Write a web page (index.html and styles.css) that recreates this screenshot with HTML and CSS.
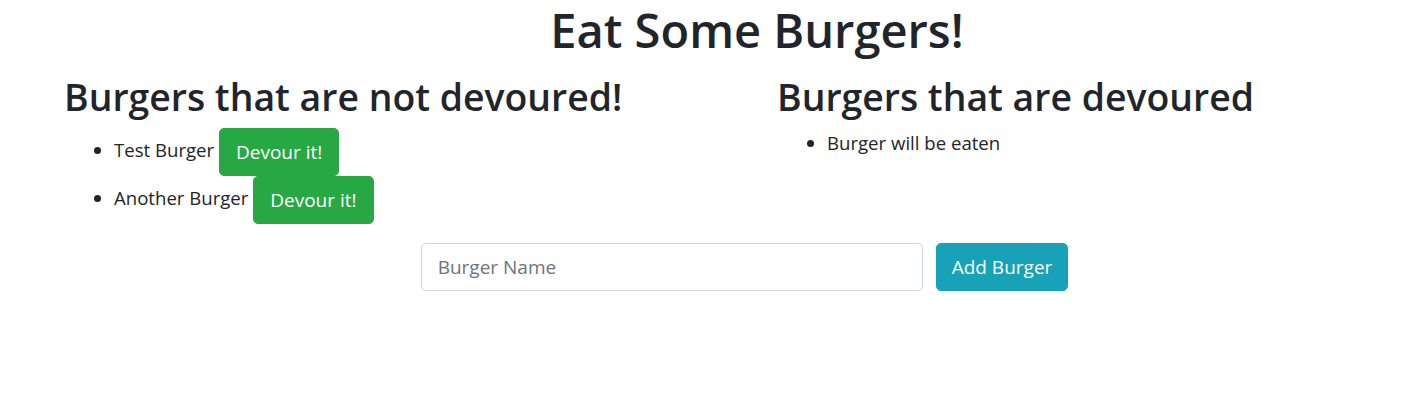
FILE: index.html
```html
<!DOCTYPE html>
<html lang="en">
<head>
<meta charset="utf-8">
<title>Eat Some Burgers!</title>
<link rel="stylesheet" href="styles.css">
</head>
<body>
<div class="page">
  <h1 class="title">Eat Some Burgers!</h1>
  <div class="columns">
    <section class="col">
      <h2 class="col-heading">Burgers that are not devoured!</h2>
      <ul class="burger-list">
        <li class="burger-item">Test Burger <button class="btn btn-green" type="button">Devour it!</button></li>
        <li class="burger-item">Another Burger <button class="btn btn-green" type="button">Devour it!</button></li>
      </ul>
    </section>
    <section class="col">
      <h2 class="col-heading">Burgers that are devoured</h2>
      <ul class="burger-list eaten">
        <li class="burger-item">Burger will be eaten</li>
      </ul>
    </section>
  </div>
  <form class="add-form">
    <input class="name-input" type="text" placeholder="Burger Name">
    <button class="btn btn-teal" type="button">Add Burger</button>
  </form>
</div>
</body>
</html>
```

FILE: styles.css
```css
* { box-sizing: border-box; }
html, body { margin: 0; padding: 0; background: #fff; }
body {
  font-family: "Open Sans", "Noto Sans", sans-serif;
  color: #212529;
  font-size: 18.6px;
  line-height: 1.5;
}
.page { width: 1415px; }
.title {
  margin: 0;
  padding: 2px 0 0 99px;
  text-align: center;
  font-size: 47px;
  font-weight: 600;
  line-height: 56px;
  color: #212529;
}
.columns {
  display: grid;
  grid-template-columns: 713px 1fr;
  padding: 16px 0 0 64px;
}
.col-heading {
  margin: 0 0 8px 0;
  font-size: 37.4px;
  font-weight: 600;
  line-height: 46px;
  color: #212529;
}
.burger-list {
  margin: 0;
  padding-left: 50px;
}
.burger-item { line-height: 44px; }
.eaten .burger-item { line-height: 30px; }
.btn {
  display: inline-block;
  font-family: inherit;
  font-size: 19px;
  line-height: 28px;
  padding: 9px 16px;
  border: 1px solid transparent;
  border-radius: 5px;
  color: #fff;
  cursor: pointer;
  vertical-align: middle;
}
.btn-green { background: #28a745; border-color: #28a745; }
.btn-teal { background: #17a2b8; border-color: #17a2b8; padding: 9px 15px; }
.add-form {
  display: flex;
  justify-content: center;
  gap: 13px;
  padding: 19px 0 0 74px;
}
.name-input {
  width: 502px;
  height: 48px;
  padding: 0 16px;
  font-family: inherit;
  font-size: 19px;
  color: #495057;
  border: 1px solid #ced4da;
  border-radius: 5px;
  outline: none;
}
.name-input::placeholder { color: #6c757d; opacity: 1; }
```
